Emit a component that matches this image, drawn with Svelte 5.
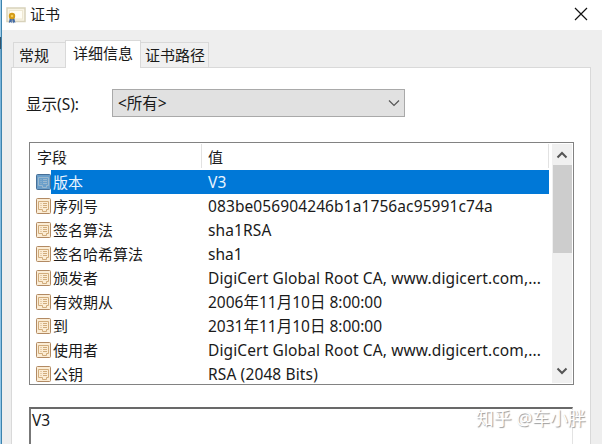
<script>
  const tabs = [
    { label: '常规', width: 52 },
    { label: '详细信息', width: 76, active: true },
    { label: '证书路径', width: 68 },
  ];
  const rows = [
    { field: '版本', value: 'V3', spacing: 0.3 },
    { field: '序列号', value: '083be056904246b1a1756ac95991c74a', spacing: 0.1 },
    { field: '签名算法', value: 'sha1RSA', spacing: 0.13 },
    { field: '签名哈希算法', value: 'sha1', spacing: 0 },
    { field: '颁发者', value: 'DigiCert Global Root CA, www.digicert.com,...', spacing: 0.12 },
    { field: '有效期从', value: '2006年11月10日 8:00:00', spacing: 0 },
    { field: '到', value: '2031年11月10日 8:00:00', spacing: 0 },
    { field: '使用者', value: 'DigiCert Global Root CA, www.digicert.com,...', spacing: 0.12 },
    { field: '公钥', value: 'RSA (2048 Bits)', spacing: 0.13 },
  ];
  let selected = $state(0);
</script>

<div class="screen">
  <div class="behind"><i></i></div>
  <div class="dialog">
    <header>
      <svg class="cert" width="20" height="17" viewBox="0 0 20 17">
        <rect x="1" y="1" width="18" height="13.5" fill="#f8f4e5" stroke="#d8d2bb" stroke-width="1.5" />
        <rect x="3.5" y="3.5" width="13" height="8.5" fill="#fffdf5" stroke="#eee8d3" />
        <path d="M4 10 2.800 16l1.800-1 1 1.300L6 12l1 4.500 1-1.300 1.400.6L8 10z" fill="#426aa5" />
        <circle cx="6" cy="9" r="3.200" fill="#d49b16" />
        <circle cx="6" cy="9" r="1.300" fill="#f5ce56" />
      </svg>
      <span class="title">证书</span>
      <svg class="close" width="14" height="14" viewBox="0 0 14 14"><path d="M1 1l12 12M13 1L1 13" fill="none" stroke="#111" stroke-width="1.200" /></svg>
    </header>

    <nav>
      {#each tabs as t}
        <div class="tab" class:active={t.active} style:width="{t.width}px">{t.label}</div>
      {/each}
    </nav>

    <main>
      <div class="filter">
        <span class="label">显示(S):</span>
        <div class="select">
          <span>&lt;所有&gt;</span>
          <svg width="12" height="8" viewBox="0 0 12 8"><path d="M1 1.500l5 5 5-5" fill="none" stroke="#555" stroke-width="1.200" /></svg>
        </div>
      </div>

      <div class="list">
        <div class="table">
          <div class="head"><span class="c1">字段</span><span class="c2">值</span></div>
          {#each rows as r, i}
            <div class="row" class:selected={i === selected}>
              <svg class="icon" width="15" height="16" viewBox="0 0 15 16">
                <rect class="paper" x=".5" y=".5" width="14" height="15" rx="1" />
                <path class="lines" d="M2.500 3.500h10v8h-2v2h-4v-2h-4zM4.500 5.500h1M7 5.500h4M4.500 7.500h1M7 7.500h4M4.500 9.500h1M7 9.500h4" />
              </svg>
              <div class="cells">
                <span class="field">{r.field}</span>
                <span class="value" style:letter-spacing="{r.spacing}px">{r.value}</span>
              </div>
            </div>
          {/each}
        </div>
        <div class="scroll">
          <svg width="12" height="8" viewBox="0 0 12 8"><path d="M1.500 6.500L6 2l4.500 4.500" /></svg>
          <div class="thumb"></div>
          <svg class="down" width="12" height="8" viewBox="0 0 12 8"><path d="M1.500 1.500L6 6l4.500-4.500" /></svg>
        </div>
      </div>

      <div class="detail">{rows[selected].value}</div>
    </main>
  </div>
  <div class="watermark">知乎 @车小胖</div>
</div>

<style>
  .screen {
    position: relative;
    display: flex;
    width: 602px;
    height: 444px;
    overflow: hidden;
    font: 15px/24px 'Noto Sans', 'Noto Sans CJK SC', sans-serif;
    color: #1a1a1a;
    white-space: nowrap;
  }
  .behind {
    width: 2px;
    flex: none;
    box-sizing: border-box;
    background: linear-gradient(#9ccbe8 0 36px, #6ea5c8 50px, #78b3da 80px, #93c8e9);
    border-right: 1px solid #3d83ad;
    padding-top: 37px;
  }
  .behind i { display: block; height: 12px; background: #34546c; }
  .dialog {
    flex: 1;
    min-width: 0;
    display: flex;
    flex-direction: column;
    background: #eee;
  }
  header {
    height: 30px;
    flex: none;
    display: flex;
    align-items: center;
    background: #fff;
    padding: 0 14px 0 4px;
  }
  .cert { margin-top: 1px; }
  .title { margin: -2px 0 0 4px; }
  .close { margin-left: auto; margin-top: -2px; }
  nav {
    height: 37px;
    flex: none;
    display: flex;
    align-items: flex-end;
    padding-left: 11px;
  }
  .tab {
    box-sizing: border-box;
    height: 25px;
    border: 1px solid #d9d9d9;
    border-width: 1px 1px 0 0;
    background: #f0f0f0;
    padding-left: 4px;
    line-height: 25px;
  }
  .tab:first-child { border-left-width: 1px; padding-left: 5px; border-right: 0; }
  .tab.active {
    height: 28px;
    margin-bottom: -1px;
    border-left-width: 1px;
    background: #fff;
    padding-left: 7px;
    line-height: 24px;
    z-index: 1;
  }
  main {
    flex: 1;
    min-height: 0;
    box-sizing: border-box;
    margin: 0 11px 0 9px;
    background: #fff;
    border: 1px solid #d9d9d9;
    border-bottom: 0;
    padding: 21px 16px 0 17px;
  }
  .filter { height: 28px; display: flex; align-items: center; }
  .label { width: 83px; margin-left: -3px; padding-top: 2px; font-size: 15.5px; }
  .select {
    box-sizing: border-box;
    display: flex;
    align-items: center;
    justify-content: space-between;
    margin-left: 3px;
    width: 293px;
    height: 28px;
    border: 1px solid #a9a9a9;
    background: #e1e1e1;
    padding: 0 4px 0 5px;
    font-size: 15.5px;
  }
  .list {
    box-sizing: border-box;
    display: flex;
    width: 545px;
    height: 243px;
    margin-top: 25px;
    border: 1px solid #828282;
    overflow: hidden;
  }
  .table { width: 519px; flex: none; }
  .head {
    box-sizing: border-box;
    display: flex;
    height: 27px;
    padding: 1px 0 2px 7px;
  }
  .head span { line-height: 27px; }
  .c1 { box-sizing: border-box; width: 165px; border-right: 1px solid #e2e2e2; }
  .c2 { flex: 1; padding-left: 6px; border-right: 1px solid #e2e2e2; }
  .row { display: flex; height: 24px; padding-left: 6px; align-items: center; }
  .icon { flex: none; }
  .paper { fill: #fbecd4; stroke: #b28a63; }
  .lines { fill: none; stroke: #d1ac7c; stroke-width: 1; }
  .selected .paper { fill: #6b9fca; stroke: #476f97; }
  .selected .lines { stroke: #9bb8ce; }
  .cells { display: flex; flex: 1; height: 24px; padding-left: 2px; }
  .field { width: 155px; flex: none; }
  .value { font-size: 15.5px; }
  .selected .cells { background: #0078d7; color: #e8f4ff; }
  .scroll {
    box-sizing: border-box;
    display: flex;
    flex-direction: column;
    align-items: center;
    width: 20px;
    margin: 1px 0 1px 3px;
    padding: 7px 0 8px;
    background: #f0f0f0;
  }
  .scroll path { fill: none; stroke: #555; stroke-width: 2; }
  .thumb { width: 19px; height: 88px; margin-top: 6px; background: #cdcdcd; }
  .down { margin-top: auto; }
  .detail {
    box-sizing: border-box;
    width: 544px;
    height: 60px;
    margin-top: 22px;
    border: 1px solid #e3e3e3;
    border-top: 2px solid #696969;
    border-left: 2px solid #777;
    padding: 0 1px;
    font-size: 15.5px;
    line-height: 23px;
  }
  .watermark {
    position: absolute;
    left: 476px;
    top: 406px;
    font-size: 17.8px;
    color: #fff;
    text-shadow: 1px 1px 1px #999;
  }
</style>
